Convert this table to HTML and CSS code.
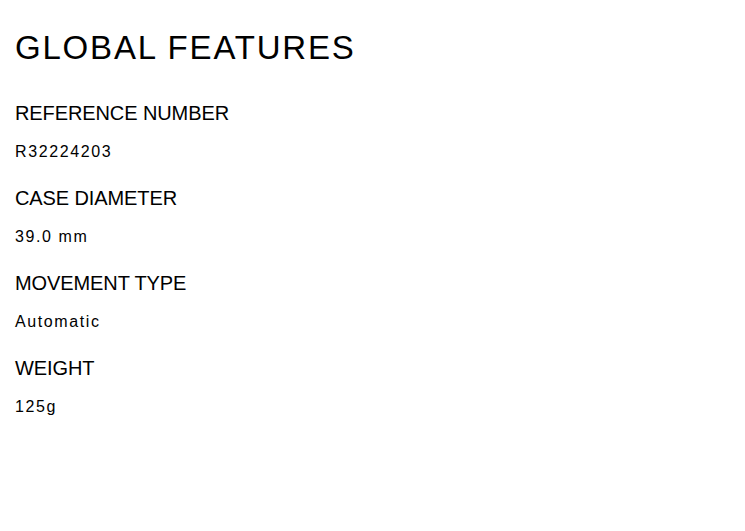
FILE: index.html
```html
<!DOCTYPE html>
<html>
<head>
<meta charset="utf-8">
<link rel="stylesheet" href="styles.css">
</head>
<body>
<section class="features">
  <h1 class="title">GLOBAL FEATURES</h1>
  <dl class="list">
    <dt class="label">REFERENCE NUMBER</dt>
    <dd class="value">R32224203</dd>
    <dt class="label">CASE DIAMETER</dt>
    <dd class="value">39.0 mm</dd>
    <dt class="label">MOVEMENT TYPE</dt>
    <dd class="value">Automatic</dd>
    <dt class="label">WEIGHT</dt>
    <dd class="value">125g</dd>
  </dl>
</section>
</body>
</html>
```
FILE: styles.css
```css
html, body {
  margin: 0;
  padding: 0;
  background: #fff;
}
body {
  font-family: "Liberation Sans", Arial, sans-serif;
  color: #000;
}
.features {
  padding: 28px 15px;
}
.title {
  margin: 0;
  font-size: 33px;
  font-weight: normal;
  letter-spacing: 1.8px;
  line-height: 40px;
}
.list {
  margin: 33px 0 0;
}
.label {
  font-size: 20px;
  line-height: 24px;
  letter-spacing: -0.1px;
  margin: 0;
}
.value {
  margin: 17px 0 24px;
  font-size: 16px;
  line-height: 20px;
  letter-spacing: 1.6px;
}
```
